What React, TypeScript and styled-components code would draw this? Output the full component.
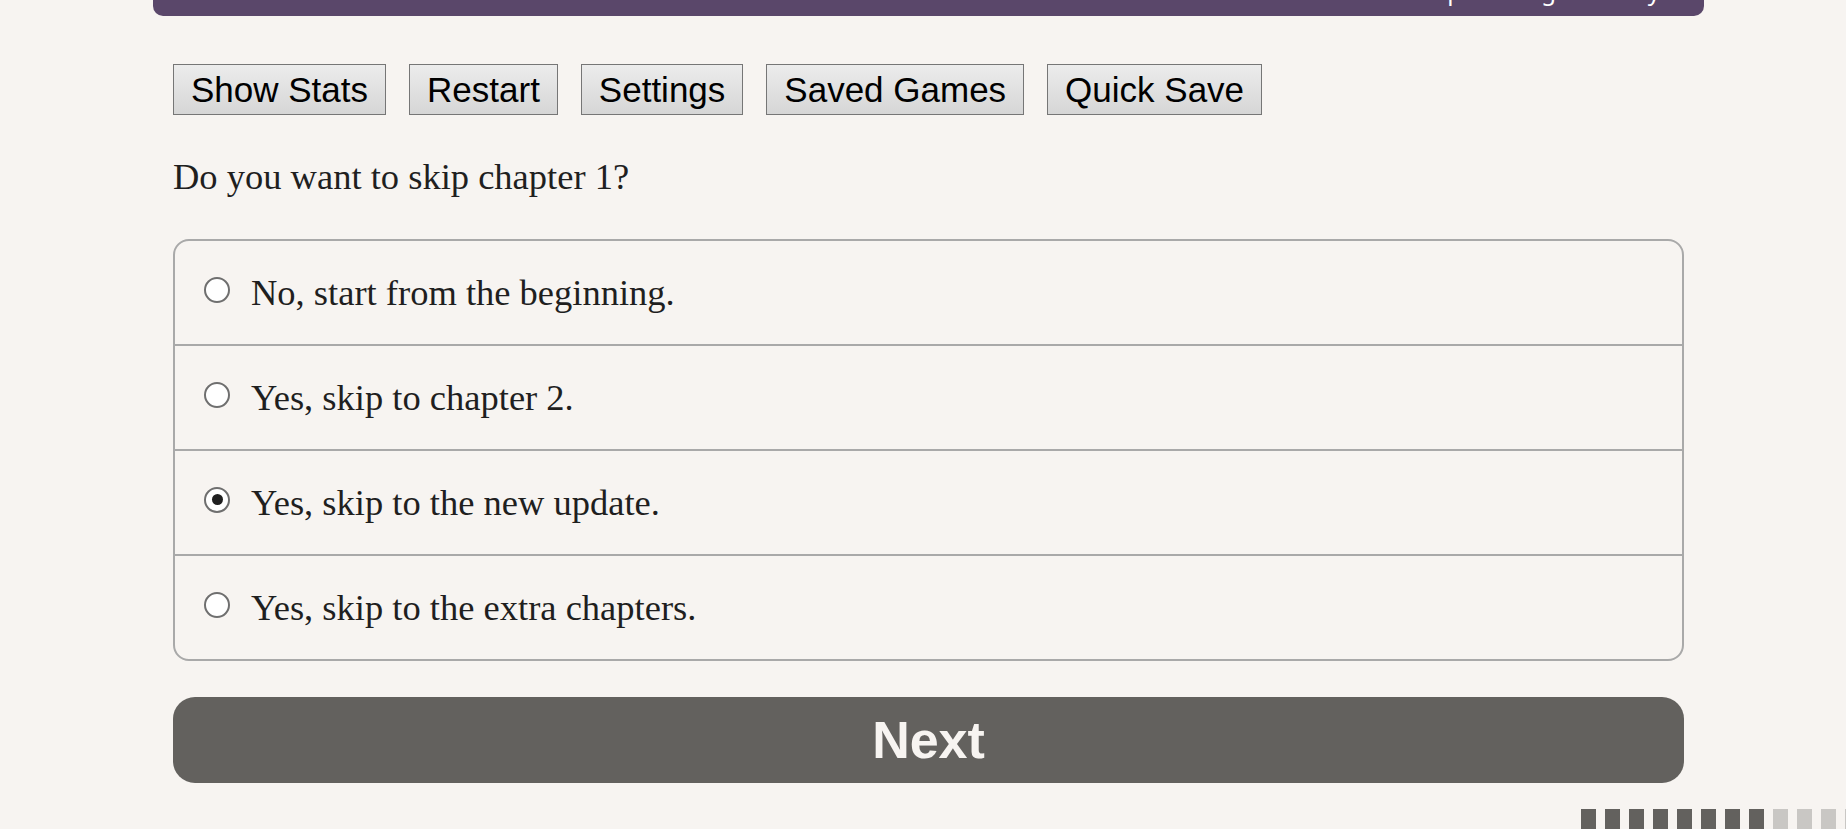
import React, { useState } from 'react';
import styled, { createGlobalStyle } from 'styled-components';

const GlobalStyle = createGlobalStyle`
    html, body {
        margin: 0;
        padding: 0;
        background-color: #f7f4f1;
        overflow: hidden;
    }
`;

const Page = styled.div`
    width: 1551px;
    margin: 0 0 0 153px;
`;

const HeaderBar = styled.div`
    height: 16px;
    background-color: #5a476a;
    border-radius: 0 0 10px 10px;
    display: flex;
    justify-content: flex-end;
    align-items: flex-start;
    gap: 14px;
    padding-right: 44px;
    overflow: hidden;
`;

const HeaderLink = styled.span`
    font-family: "Noto Sans", "Liberation Sans", sans-serif;
    font-size: 24px;
    line-height: 24px;
    margin-top: -21px;
    color: #ffffff;
`;

const Content = styled.div`
    padding: 0 20px;
`;

const Toolbar = styled.div`
    display: flex;
    gap: 23px;
    margin-top: 48px;
`;

const ToolButton = styled.button`
    font-family: "Liberation Sans", Arial, sans-serif;
    font-size: 35px;
    line-height: 41px;
    color: #000;
    padding: 4px 17px;
    border: 1px solid #767676;
    border-radius: 0;
    background: linear-gradient(#ececec, #d6d6d6);
    cursor: pointer;
`;

const Question = styled.p`
    font-family: "Liberation Serif", "Times New Roman", serif;
    font-size: 36.5px;
    line-height: 43px;
    color: #1f1f1f;
    margin: 40px 0 41px;
`;

const ChoiceList = styled.div`
    border: 2px solid #a9a9a9;
    border-radius: 16px;
    overflow: hidden;
`;

const ChoiceRow = styled.label<{ $first: boolean }>`
    display: flex;
    align-items: flex-start;
    gap: 21px;
    padding: 29.5px 29px 30.5px;
    border-top: ${(p) => (p.$first ? 'none' : '2px solid #a9a9a9')};
    cursor: pointer;
`;

const Radio = styled.span<{ $checked: boolean }>`
    flex: none;
    box-sizing: border-box;
    width: 26px;
    height: 26px;
    margin-top: 6px;
    border: 2px solid #6f6f6f;
    border-radius: 50%;
    background-color: #ffffff;
    display: flex;
    align-items: center;
    justify-content: center;

    &::after {
        content: '';
        width: 11px;
        height: 11px;
        border-radius: 50%;
        background-color: #1f1f1f;
        display: ${(p) => (p.$checked ? 'block' : 'none')};
    }
`;

const ChoiceText = styled.span`
    font-family: "Liberation Serif", "Times New Roman", serif;
    font-size: 36.5px;
    line-height: 43px;
    color: #1f1f1f;
`;

const NextButton = styled.button`
    display: block;
    width: 100%;
    height: 86px;
    margin-top: 36px;
    border: none;
    border-radius: 22px;
    background-color: #63615e;
    color: #f7f4f1;
    font-family: "Liberation Sans", Arial, sans-serif;
    font-weight: bold;
    font-size: 52px;
    cursor: pointer;
`;

const Progress = styled.div`
    display: flex;
    gap: 9px;
    margin: 26px 0 0 1408px;
`;

const Step = styled.span<{ $done: boolean }>`
    flex: none;
    width: 15px;
    height: 20px;
    background-color: ${(p) => (p.$done ? '#63615e' : '#c9c7c4')};
`;

const options = [
    'No, start from the beginning.',
    'Yes, skip to chapter 2.',
    'Yes, skip to the new update.',
    'Yes, skip to the extra chapters.',
];

const tools = ['Show Stats', 'Restart', 'Settings', 'Saved Games', 'Quick Save'];

const App: React.FC = () => {
    const [selected, setSelected] = useState(2);

    return (
        <>
            <GlobalStyle />
            <Page>
                <HeaderBar>
                    <HeaderLink>Help</HeaderLink>
                    <HeaderLink>Settings</HeaderLink>
                    <HeaderLink>Library</HeaderLink>
                </HeaderBar>
                <Content>
                    <Toolbar>
                        {tools.map((t) => (
                            <ToolButton key={t}>{t}</ToolButton>
                        ))}
                    </Toolbar>
                    <Question>Do you want to skip chapter 1?</Question>
                    <ChoiceList>
                        {options.map((o, i) => (
                            <ChoiceRow key={o} $first={i === 0} onClick={() => setSelected(i)}>
                                <Radio $checked={selected === i} />
                                <ChoiceText>{o}</ChoiceText>
                            </ChoiceRow>
                        ))}
                    </ChoiceList>
                    <NextButton>Next</NextButton>
                    <Progress>
                        {Array.from({ length: 12 }).map((_, i) => (
                            <Step key={i} $done={i < 8} />
                        ))}
                    </Progress>
                </Content>
            </Page>
        </>
    );
};

export default App;
